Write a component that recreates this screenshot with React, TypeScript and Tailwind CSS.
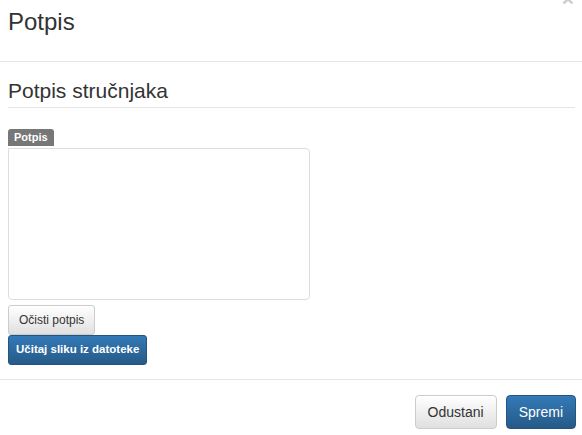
export default function App() {
  return (
    <div className="w-[582px] h-[435px] bg-white overflow-hidden text-[#333] font-['Liberation_Sans',Arial,sans-serif]">
      {/* Header */}
      <div className="relative h-[62px] border-b border-[#e5e5e5] pl-[8px] pt-[7px]">
        <h4 className="text-[24px] leading-[30px] font-normal">Potpis</h4>
        <span className="absolute right-[8px] top-[-12px] text-[21px] font-bold leading-none text-[#ccc]">×</span>
      </div>

      {/* Body */}
      <div className="pl-[8px] pr-[7px] pt-[15px]">
        <h3 className="text-[21px] leading-[28px] font-normal border-b border-[#e5e5e5] pb-[2px]">Potpis stručnjaka</h3>

        <div className="mt-[16px]">
          <span className="inline-block bg-[#777] text-white text-[11px] font-bold leading-[17px] px-[6px] rounded-t-[3px]">Potpis</span>
          <div className="w-[302px] h-[152px] border border-[#ddd] rounded-[4px] rounded-tl-none bg-white" />
        </div>

        <div className="mt-[5px] flex flex-col items-start">
          <button className="h-[30px] px-[10px] text-[12px] text-[#333] border border-[#ccc] rounded-[3px] bg-gradient-to-b from-white to-[#e0e0e0]">
            Očisti potpis
          </button>
          <button className="h-[30px] px-[7px] text-[11.5px] font-bold text-white border border-[#245580] rounded-[3px] bg-gradient-to-b from-[#337ab7] to-[#265a88]">
            Učitaj sliku iz datoteke
          </button>
        </div>
      </div>

      {/* Footer */}
      <div className="mt-[14px] border-t border-[#e5e5e5] flex justify-end gap-[9px] pr-[6px] pt-[15px]">
        <button className="h-[34px] px-[12px] text-[14px] text-[#333] border border-[#ccc] rounded-[4px] bg-gradient-to-b from-white to-[#e0e0e0]">
          Odustani
        </button>
        <button className="h-[34px] px-[12px] text-[14px] text-white border border-[#245580] rounded-[4px] bg-gradient-to-b from-[#337ab7] to-[#265a88]">
          Spremi
        </button>
      </div>
    </div>
  );
}
